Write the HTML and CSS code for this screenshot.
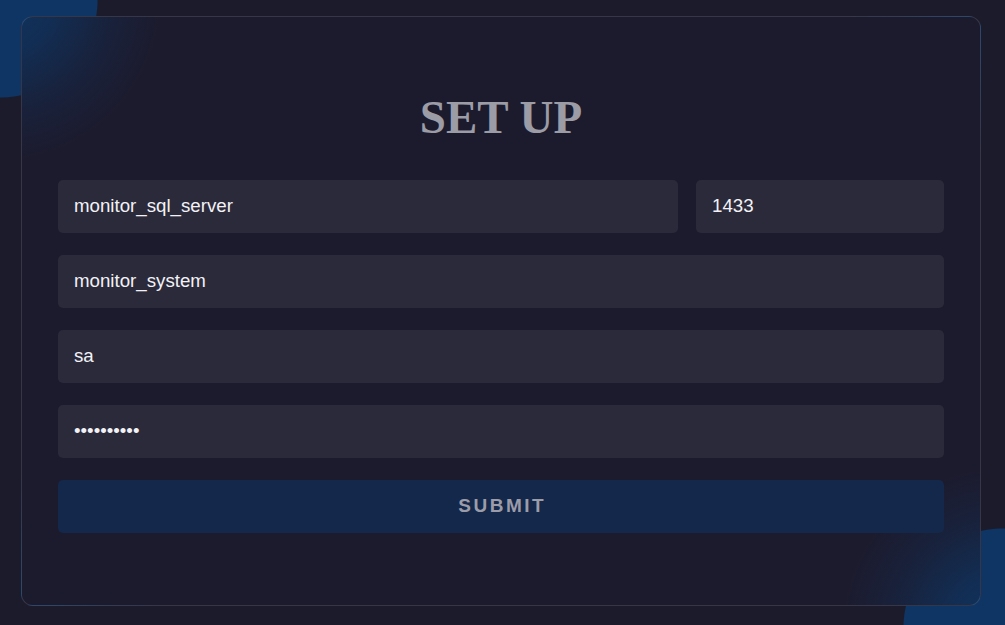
FILE: index.html
```html
<!DOCTYPE html>
<html>
<head>
<meta charset="utf-8">
<link rel="stylesheet" href="styles.css">
</head>
<body>
<main class="card">
  <h1 class="title">SET UP</h1>
  <form class="form">
    <div class="row">
      <input class="field field-grow" type="text" value="monitor_sql_server">
      <input class="field field-port" type="text" value="1433">
    </div>
    <input class="field" type="text" value="monitor_system">
    <input class="field" type="text" value="sa">
    <input class="field" type="password" value="abcdefghij">
    <button class="submit" type="button">SUBMIT</button>
  </form>
</main>
</body>
</html>
```
FILE: styles.css
```css
html, body {
  margin: 0;
  padding: 0;
}
html {
  overflow: hidden;
}
body {
  box-sizing: border-box;
  width: 1005px;
  height: 625px;
  overflow: hidden;
  padding: 16px 0 0 21px;
  background:
    radial-gradient(circle 98px at 0 0, #0e3563 97px, rgba(14, 53, 99, 0) 98px),
    radial-gradient(circle 100px at 1003px 628px, #0e3563 99px, rgba(14, 53, 99, 0) 100px),
    #1c1b2c;
  font-family: "Liberation Sans", Arial, sans-serif;
}
.card {
  box-sizing: border-box;
  width: 960px;
  height: 590px;
  padding: 0 36px;
  border: 1px solid rgba(255, 255, 255, 0.12);
  border-radius: 12px;
  background:
    radial-gradient(circle at -22px -17px, rgba(14, 53, 99, 0.95) 0, rgba(14, 53, 99, 0.7) 55px, rgba(14, 53, 99, 0.25) 110px, rgba(14, 53, 99, 0) 160px),
    radial-gradient(circle at 981px 611px, rgba(14, 53, 99, 0.95) 0, rgba(14, 53, 99, 0.7) 55px, rgba(14, 53, 99, 0.25) 110px, rgba(14, 53, 99, 0) 160px),
    #1c1b2e;
}
.title {
  margin: 73px 0 35px;
  text-align: center;
  font-family: "Liberation Serif", "Times New Roman", serif;
  font-weight: bold;
  font-size: 47px;
  line-height: 55px;
  color: #9c9ca7;
}
.form {
  display: flex;
  flex-direction: column;
  gap: 22px;
}
.row {
  display: flex;
  gap: 18px;
}
.field {
  box-sizing: border-box;
  height: 53px;
  width: 100%;
  padding: 0 16px 2px;
  border: none;
  border-radius: 5px;
  background: #2b2a3a;
  color: #f2f2f6;
  font-family: "Liberation Sans", Arial, sans-serif;
  font-size: 18.7px;
  outline: none;
}
.field-grow {
  flex: 1;
  width: auto;
}
.field-port {
  width: 248px;
  flex: none;
}
.submit {
  height: 53px;
  border: none;
  border-radius: 5px;
  background: #13284a;
  color: #9c9ca9;
  font-family: "Liberation Sans", Arial, sans-serif;
  font-weight: bold;
  font-size: 19px;
  letter-spacing: 2.5px;
  padding: 0 0 2px 2.5px;
}
```
